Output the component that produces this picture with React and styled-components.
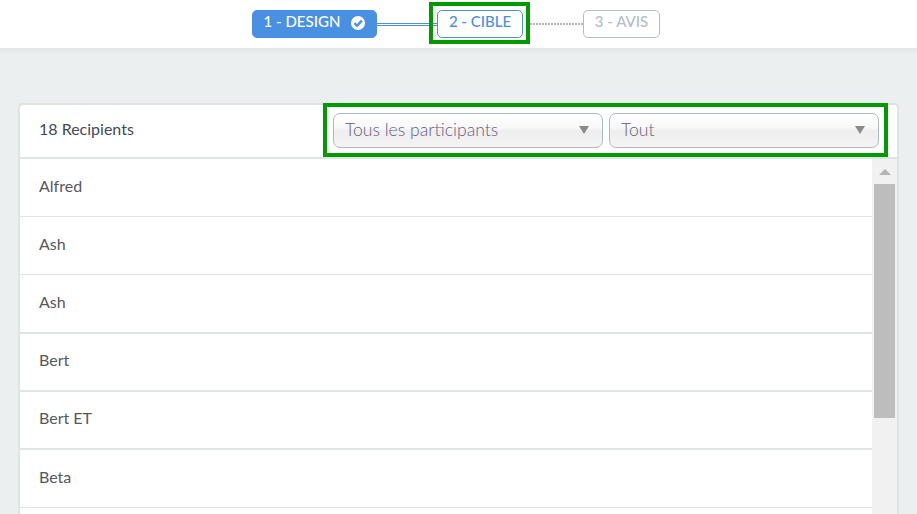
import React from "react";
import styled, { createGlobalStyle } from "styled-components";

const Global = createGlobalStyle`
  html, body { margin: 0; padding: 0; height: 514px; overflow: hidden; background: #ebeff0; }
  body { font-family: Lato, "Open Sans", sans-serif; }
  * { box-sizing: border-box; }
`;

const TopBar = styled.header`
  height: 48px;
  background: #fff;
  display: flex;
  align-items: center;
  padding-left: 252px;
`;

const StepLabel = styled.span`
  position: relative;
  top: -3px;
`;

const Step = styled.div`
  height: 28px;
  display: flex;
  align-items: center;
  justify-content: center;
  gap: 11px;
  width: ${(p) => p.$width}px;
  border-radius: 5px;
  font-size: 15px;
  font-weight: 500;
  white-space: nowrap;
  flex: none;
  background: ${(p) => (p.$state === "done" ? "#4a90e2" : "#fff")};
  color: ${(p) => (p.$state === "done" ? "#fff" : p.$state === "active" ? "#4a90e2" : "#b3bdc2")};
  border: 1px solid ${(p) => (p.$state === "done" ? "#4a90e2" : p.$state === "active" ? "#4a90e2" : "#b3bdc2")};
`;

const Link = styled.span`
  height: 3px;
  flex: none;
  width: ${(p) => p.$width}px;
  border-top: 3px double #4a90e2;
`;

const Dots = styled.span`
  height: 2px;
  flex: none;
  width: 53px;
  background: repeating-linear-gradient(90deg, #aeb8bd 0 2px, transparent 2px 3px);
`;

const HighlightStep = styled.div`
  display: flex;
  align-items: center;
  flex: none;
  align-self: flex-start;
  margin-top: 2px;
  height: 42px;
  padding: 0 3px 0 0;
  border: 4px solid #009a00;
  background: #fff;
  & > ${Step} { margin-top: 2px; }
  & > ${Link} { margin-top: 2px; }
`;

const Page = styled.main`
  height: 466px;
  padding: 55px 18px 0;
  background: linear-gradient(#e2e5e6, #ebeff0 7px);
  background-repeat: no-repeat;
`;

const Card = styled.section`
  background: #fff;
  border: 2px solid #dfe3e4;
  border-bottom: 0;
  border-radius: 5px 5px 0 0;
  height: 411px;
`;

const CardHead = styled.div`
  height: 56px;
  margin-top: -2px;
  display: flex;
  align-items: flex-start;
  justify-content: space-between;
  padding: 0 9px 0 19px;
  border-bottom: 2px solid #dfe3e4;
`;

const Count = styled.div`
  padding-top: 16px;
  font-size: 16px;
  line-height: 20px;
  color: #3f4a55;
`;

const Filters = styled.div`
  width: 565px;
  height: 54px;
  display: flex;
  gap: 6px;
  padding: 6px 5px 0 6px;
  border: 4px solid #009a00;
  background: #fff;
`;

const SelectLabel = styled.span`
  position: relative;
  top: -1px;
`;

const Select = styled.div`
  height: 35px;
  width: ${(p) => p.$width}px;
  flex: none;
  padding: 0 11px;
  display: flex;
  align-items: center;
  justify-content: space-between;
  border: 1px solid #aeb8bf;
  border-radius: 7px;
  background: linear-gradient(#fff 0, #f7f7f7 45%, #eeeeee 50%, #f4f4f4 100%);
  font-size: 17.6px;
  font-weight: 300;
  color: #655c82;
`;

const Caret = styled.span`
  width: 0;
  height: 0;
  margin-right: 2px;
  margin-top: -1px;
  border-left: 5px solid transparent;
  border-right: 5px solid transparent;
  border-top: 8px solid #8a8a8a;
`;

const Body = styled.div`
  height: 355px;
  overflow: hidden;
  display: flex;
  align-items: stretch;
`;

const List = styled.ul`
  flex: 1;
  margin: 0;
  padding: 0;
  list-style: none;
`;

const Row = styled.li`
  height: 58.2px;
  padding: 0 0 4px 19px;
  display: flex;
  align-items: center;
  font-size: 16px;
  color: #55585c;
  border-bottom: ${(p) => (p.$thick ? 2 : 1)}px solid #dfe3e4;
`;

const ScrollTrack = styled.div`
  width: 25px;
  flex: none;
  background: #f1f1f1;
  padding: 0 2px;
`;

const ScrollArrow = styled.div`
  height: 25px;
  display: flex;
  align-items: center;
  justify-content: center;
  &::before {
    content: "";
    border-left: 6px solid transparent;
    border-right: 6px solid transparent;
    border-bottom: 6px solid #b4b4b4;
  }
`;

const ScrollThumb = styled.div`
  height: 234px;
  background: #bdbdbd;
`;

const CheckSvg = styled.svg`
  margin-top: -2px;
`;

const CheckIcon = () => (
  <CheckSvg width="14" height="14" viewBox="0 0 14 14" aria-hidden="true">
    <circle cx="7" cy="7" r="7" fill="#fff" />
    <path d="M3.4 7.2 6 9.8 10.8 4.6" fill="none" stroke="#4a90e2" strokeWidth="2.4" />
  </CheckSvg>
);

const people = [
  ["Alfred", false],
  ["Ash", false],
  ["Ash", true],
  ["Bert", true],
  ["Bert ET", true],
  ["Beta", false],
];

export default function App() {
  return (
    <>
      <Global />
      <TopBar>
        <Step $state="done" $width={125}>
          <StepLabel>1 - DESIGN</StepLabel>
          <CheckIcon />
        </Step>
        <Link $width={52} />
        <HighlightStep>
          <Link $width={4} />
          <Step $state="active" $width={86}><StepLabel>2 - CIBLE</StepLabel></Step>
        </HighlightStep>
        <Dots />
        <Step $state="todo" $width={77}><StepLabel>3 - AVIS</StepLabel></Step>
      </TopBar>
      <Page>
        <Card>
          <CardHead>
            <Count>18 Recipients</Count>
            <Filters>
              <Select $width={270}>
                <SelectLabel>Tous les participants</SelectLabel>
                <Caret />
              </Select>
              <Select $width={270}>
                <SelectLabel>Tout</SelectLabel>
                <Caret />
              </Select>
            </Filters>
          </CardHead>
          <Body>
            <List>
              {people.map(([name, thick], i) => (
                <Row key={i} $thick={thick}>{name}</Row>
              ))}
            </List>
            <ScrollTrack>
              <ScrollArrow />
              <ScrollThumb />
            </ScrollTrack>
          </Body>
        </Card>
      </Page>
    </>
  );
}
